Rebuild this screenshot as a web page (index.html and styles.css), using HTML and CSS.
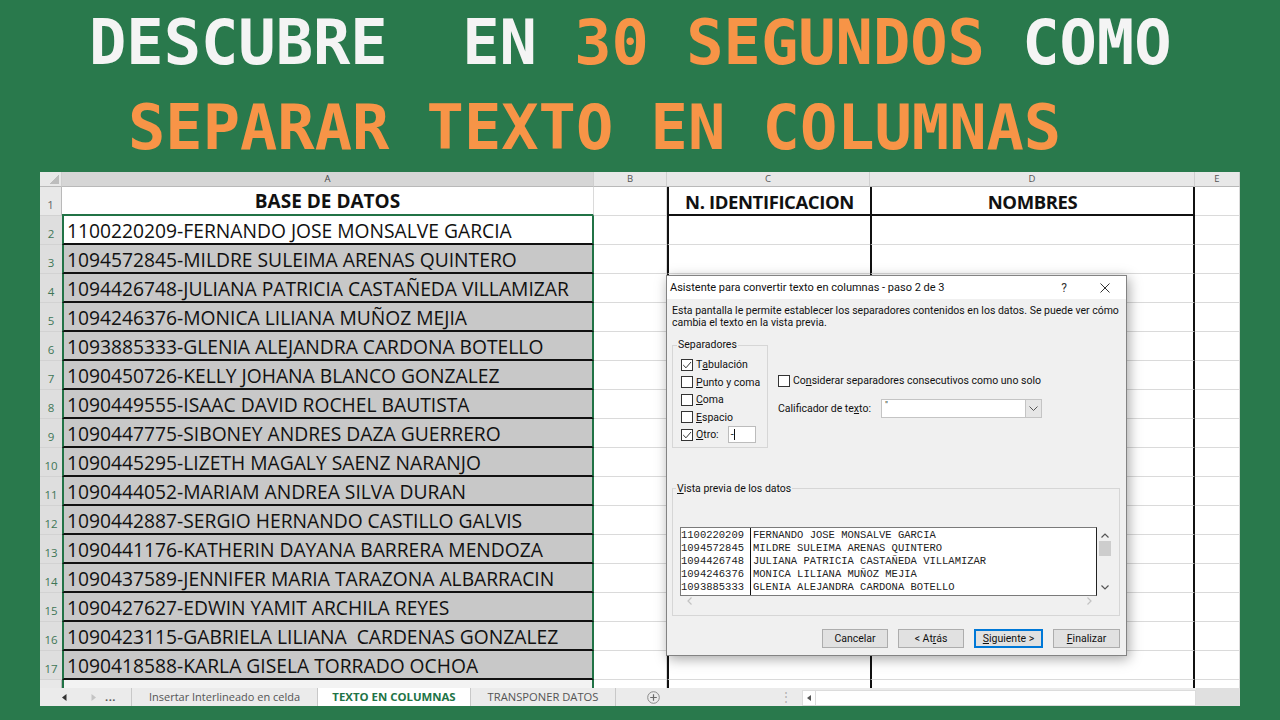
FILE: index.html
```html
<!DOCTYPE html>
<html lang="es">
<head>
<meta charset="utf-8">
<title>Separar texto en columnas</title>
<link rel="stylesheet" href="styles.css">
</head>
<body>
<div class="title">
  <div class="t1"><span class="w">DESCUBRE  EN</span> <span class="o">30 SEGUNDOS</span> <span class="w">COMO</span></div>
  <div class="t2"><span class="o">SEPARAR TEXTO EN COLUMNAS</span></div>
</div>

<div class="sheet">
  <div class="hd cn"></div><div class="hd sel">A</div><div class="hd">B</div><div class="hd">C</div><div class="hd">D</div><div class="hd">E</div>

  <div class="rh">1</div><div class="a1">BASE DE DATOS</div><div class="b"></div><div class="c h1">N. IDENTIFICACION</div><div class="d h1">NOMBRES</div><div class="e"></div>

  <div class="rh s">2</div><div class="a act">1100220209-FERNANDO JOSE MONSALVE GARCIA</div><div class="b"></div><div class="c"></div><div class="d"></div><div class="e"></div>
  <div class="rh s">3</div><div class="a">1094572845-MILDRE SULEIMA ARENAS QUINTERO</div><div class="b"></div><div class="c"></div><div class="d"></div><div class="e"></div>
  <div class="rh s">4</div><div class="a">1094426748-JULIANA PATRICIA CASTAÑEDA VILLAMIZAR</div><div class="b"></div><div class="c"></div><div class="d"></div><div class="e"></div>
  <div class="rh s">5</div><div class="a">1094246376-MONICA LILIANA MUÑOZ MEJIA</div><div class="b"></div><div class="c"></div><div class="d"></div><div class="e"></div>
  <div class="rh s">6</div><div class="a">1093885333-GLENIA ALEJANDRA CARDONA BOTELLO</div><div class="b"></div><div class="c"></div><div class="d"></div><div class="e"></div>
  <div class="rh s">7</div><div class="a">1090450726-KELLY JOHANA BLANCO GONZALEZ</div><div class="b"></div><div class="c"></div><div class="d"></div><div class="e"></div>
  <div class="rh s">8</div><div class="a">1090449555-ISAAC DAVID ROCHEL BAUTISTA</div><div class="b"></div><div class="c"></div><div class="d"></div><div class="e"></div>
  <div class="rh s">9</div><div class="a">1090447775-SIBONEY ANDRES DAZA GUERRERO</div><div class="b"></div><div class="c"></div><div class="d"></div><div class="e"></div>
  <div class="rh s">10</div><div class="a">1090445295-LIZETH MAGALY SAENZ NARANJO</div><div class="b"></div><div class="c"></div><div class="d"></div><div class="e"></div>
  <div class="rh s">11</div><div class="a">1090444052-MARIAM ANDREA SILVA DURAN</div><div class="b"></div><div class="c"></div><div class="d"></div><div class="e"></div>
  <div class="rh s">12</div><div class="a">1090442887-SERGIO HERNANDO CASTILLO GALVIS</div><div class="b"></div><div class="c"></div><div class="d"></div><div class="e"></div>
  <div class="rh s">13</div><div class="a">1090441176-KATHERIN DAYANA BARRERA MENDOZA</div><div class="b"></div><div class="c"></div><div class="d"></div><div class="e"></div>
  <div class="rh s">14</div><div class="a">1090437589-JENNIFER MARIA TARAZONA ALBARRACIN</div><div class="b"></div><div class="c"></div><div class="d"></div><div class="e"></div>
  <div class="rh s">15</div><div class="a">1090427627-EDWIN YAMIT ARCHILA REYES</div><div class="b"></div><div class="c"></div><div class="d"></div><div class="e"></div>
  <div class="rh s">16</div><div class="a">1090423115-GABRIELA LILIANA  CARDENAS GONZALEZ</div><div class="b"></div><div class="c"></div><div class="d"></div><div class="e"></div>
  <div class="rh s">17</div><div class="a">1090418588-KARLA GISELA TORRADO OCHOA</div><div class="b"></div><div class="c"></div><div class="d"></div><div class="e"></div>

  <div class="rh p"></div><div class="a p"></div><div class="b p"></div><div class="c p"></div><div class="d p"></div><div class="e p"></div>
</div>

<div class="tabs">
  <div class="nav">
    <svg class="tri" width="5" height="7" viewBox="0 0 5 7"><path d="M4.5 0 L0 3.5 L4.5 7 Z" fill="#333"/></svg>
    <svg class="tri tri-r" width="5" height="7" viewBox="0 0 5 7"><path d="M0.5 0 L5 3.5 L0.5 7 Z" fill="#c4c4c4"/></svg>
    <span class="dots">...</span>
  </div>
  <div class="tab t-ins">Insertar Interlineado en celda</div>
  <div class="tab t-act">TEXTO EN COLUMNAS</div>
  <div class="tab t-tr">TRANSPONER DATOS</div>
  <div class="plus-area">
    <svg class="plus" width="13" height="13" viewBox="0 0 13 13"><circle cx="6.5" cy="6.5" r="5.8" fill="none" stroke="#8a8a8a" stroke-width="1"/><path d="M6.5 3.2 V9.8 M3.2 6.5 H9.8" stroke="#6a6a6a" stroke-width="1.2"/></svg>
    <span class="vdots">⋮</span>
  </div>
  <div class="hbar">
    <div class="harrow"><svg width="4" height="6" viewBox="0 0 4 6"><path d="M4 0 L0 3 L4 6 Z" fill="#555"/></svg></div>
    <div class="htrack"></div>
  </div>
  <div class="tab-rest"></div>
</div>

<div class="dlg">
  <div class="dlg-title">
    <span class="dt-text">Asistente para convertir texto en columnas - paso 2 de 3</span>
    <span class="dt-help">?</span>
    <svg class="dt-close" width="10" height="10" viewBox="0 0 10 10"><path d="M0.5 0.5 L9.5 9.5 M9.5 0.5 L0.5 9.5" stroke="#333" stroke-width="1"/></svg>
  </div>
  <div class="dlg-body">
    <p class="desc">Esta pantalla le permite establecer los separadores contenidos en los datos. Se puede ver cómo<br>cambia el texto en la vista previa.</p>
    <div class="opts">
      <fieldset class="seps">
        <legend>Separadores</legend>
        <div class="chk"><span class="box"><svg width="10" height="10" viewBox="0 0 10 10"><path d="M1.2 5 L4 7.8 L9 2" fill="none" stroke="#333" stroke-width="1"/></svg></span>T<u>a</u>bulación</div>
        <div class="chk"><span class="box"></span><u>P</u>unto y coma</div>
        <div class="chk"><span class="box"></span><u>C</u>oma</div>
        <div class="chk"><span class="box"></span><u>E</u>spacio</div>
        <div class="chk"><span class="box"><svg width="10" height="10" viewBox="0 0 10 10"><path d="M1.2 5 L4 7.8 L9 2" fill="none" stroke="#333" stroke-width="1"/></svg></span><u>O</u>tro:<span class="otro">-<i class="caret"></i></span></div>
      </fieldset>
      <div class="opts-right">
        <div class="chk consec"><span class="box"></span>Co<u>n</u>siderar separadores consecutivos como uno solo</div>
        <div class="calif">
          <span class="calif-lbl">Calificador de te<u>x</u>to:</span>
          <div class="combo">
            <span class="combo-val">"</span>
            <span class="combo-btn"><svg width="9" height="5" viewBox="0 0 9 5"><path d="M0.5 0.5 L4.5 4.5 L8.5 0.5" fill="none" stroke="#555" stroke-width="1"/></svg></span>
          </div>
        </div>
      </div>
    </div>
    <fieldset class="prev">
      <legend><u>V</u>ista previa de los datos</legend>
      <div class="prev-area">
        <div class="list">
          <div class="col1">1100220209<br>1094572845<br>1094426748<br>1094246376<br>1093885333</div>
          <div class="col2">FERNANDO JOSE MONSALVE GARCIA<br>MILDRE SULEIMA ARENAS QUINTERO<br>JULIANA PATRICIA CASTAÑEDA VILLAMIZAR<br>MONICA LILIANA MUÑOZ MEJIA<br>GLENIA ALEJANDRA CARDONA BOTELLO</div>
        </div>
        <div class="vscroll">
          <svg width="8" height="5" viewBox="0 0 8 5"><path d="M0.5 4.5 L4 1 L7.5 4.5" fill="none" stroke="#555" stroke-width="1.2"/></svg>
          <span class="thumb"></span>
          <span class="vspace"></span>
          <svg width="8" height="5" viewBox="0 0 8 5"><path d="M0.5 0.5 L4 4 L7.5 0.5" fill="none" stroke="#555" stroke-width="1.2"/></svg>
        </div>
      </div>
      <div class="hscroll">
        <svg width="5" height="8" viewBox="0 0 5 8"><path d="M4.5 0.5 L1 4 L4.5 7.5" fill="none" stroke="#c2c2c2" stroke-width="1.2"/></svg>
        <svg width="5" height="8" viewBox="0 0 5 8"><path d="M0.5 0.5 L4 4 L0.5 7.5" fill="none" stroke="#c2c2c2" stroke-width="1.2"/></svg>
      </div>
    </fieldset>
    <div class="btns">
      <span class="btn b-can">Cancelar</span>
      <span class="btn b-atr">&lt; At<u>r</u>ás</span>
      <span class="btn b-sig"><u>S</u>iguiente &gt;</span>
      <span class="btn b-fin"><u>F</u>inalizar</span>
    </div>
  </div>
</div>
</body>
</html>
```

FILE: styles.css
```css
html, body {
  margin: 0;
  padding: 0;
}
body {
  background: #29794c;
  width: 1280px;
  height: 720px;
  overflow: hidden;
  position: relative;
  font-family: "Open Sans", "Liberation Sans", sans-serif;
}

/* ---------- title ---------- */
.title {
  height: 172px;
  font-family: "DejaVu Sans Mono", "Liberation Mono", monospace;
  font-weight: bold;
  font-size: 62px;
  line-height: 85px;
}
.t1, .t2 { white-space: pre; height: 85px; }
.t1 { padding-left: 89px; }
.t2 { padding-left: 128px; }
.w { color: #f4f4f4; }
.o { color: #f79447; }

/* ---------- sheet ---------- */
.sheet {
  margin-left: 40px;
  width: 1200px;
  display: grid;
  grid-template-columns: 22px 532px 73px 203px 325px 45px;
  grid-template-rows: 15px repeat(17, 29px) 8px;
  background: #fff;
}
.sheet > div {
  box-sizing: border-box;
  border-right: 1px solid #dadada;
  border-bottom: 1px solid #dadada;
  overflow: hidden;
  white-space: pre;
}
.hd {
  background: #e8e8e8;
  border-right-color: #cfcfcf !important;
  border-bottom-color: #b9b9b9 !important;
  font-size: 9.5px;
  line-height: 14px;
  color: #555;
  text-align: center;
}
.hd.sel { background: #d6d6d6; color: #444; }
.cn { position: relative; }
.cn::after {
  content: "";
  position: absolute;
  right: 2px;
  bottom: 2px;
  width: 9px;
  height: 9px;
  background: linear-gradient(135deg, transparent 50%, #bdbdbd 50%);
}
.rh {
  background: #e8e8e8;
  border-right-color: #b9b9b9 !important;
  border-bottom-color: #d2d2d2 !important;
  font-size: 11.5px;
  color: #666;
  display: flex;
  justify-content: center;
  align-items: flex-end;
  line-height: 12px;
  padding-bottom: 4px;
}
.rh.s {
  background: #dedede;
  color: #3e7656;
  border-right: 0 !important;
}
.rh.p { border-bottom: 0 !important; padding: 0; }

.a1, .a, .h1 {
  font-size: 19.25px;
  line-height: 25px;
  padding-top: 2px;
  color: #111;
}
.a1 {
  font-weight: bold;
  text-align: center;
  border-bottom: 2px solid #217346 !important;
  font-size: 19px;
}
.a {
  background: #c8c8c8;
  border-left: 2px solid #217346;
  border-right: 2px solid #217346 !important;
  border-bottom: 2px solid #111 !important;
  padding-left: 3px;
}
.a.act { background: #fff; }
.a.p {
  background: #f3f3f3;
  border-bottom: 0 !important;
  border-right-color: #217346 !important;
}
.c {
  border-left: 2px solid #111;
  border-right: 0 !important;
}
.d {
  border-left: 2px solid #111;
  border-right: 2px solid #111 !important;
}
.h1 {
  font-weight: bold;
  text-align: center;
  font-size: 18.5px;
  letter-spacing: -0.4px;
  border-bottom: 2px solid #111 !important;
}
.p { border-bottom: 0 !important; }

/* ---------- sheet tabs ---------- */
.tabs {
  margin-left: 40px;
  width: 1200px;
  height: 18px;
  display: flex;
  background: #ebebeb;
  font-size: 11px;
  color: #555;
  line-height: 18px;
}
.nav {
  width: 91px;
  display: flex;
  align-items: center;
  box-sizing: border-box;
  padding-left: 22px;
}
.tri-r { margin-left: 24px; }
.dots { margin-left: 9px; font-weight: bold; color: #555; letter-spacing: 0.5px; }
.tab {
  box-sizing: border-box;
  border-left: 1px solid #c8c8c8;
  text-align: center;
  white-space: nowrap;
}
.t-ins { width: 186px; }
.t-act {
  width: 153px;
  background: #fff;
  color: #217346;
  font-weight: bold;
  font-size: 11.4px;
}
.t-tr { width: 146px; border-right: 1px solid #c8c8c8; font-size: 11.2px; }
.plus-area {
  width: 186px;
  display: flex;
  align-items: center;
  box-sizing: border-box;
  padding-left: 31px;
}
.vdots { margin-left: 120px; color: #b0b0b0; font-size: 12px; }
.hbar {
  width: 394px;
  display: flex;
  align-items: center;
  padding-top: 2px;
  box-sizing: border-box;
  height: 18px;
}
.harrow {
  width: 14px;
  height: 16px;
  display: flex;
  align-items: center;
  justify-content: center;
  background: #fff;
  border: 1px solid #dcdcdc;
  box-sizing: border-box;
}
.htrack {
  flex: 1;
  height: 16px;
  background: #fff;
  border: 1px solid #dcdcdc;
  border-left: 0;
  box-sizing: border-box;
}
.tab-rest { flex: 1; background: #e0e0e0; }

/* ---------- dialog ---------- */
.dlg {
  position: absolute;
  left: 666px;
  top: 275px;
  width: 461px;
  height: 381px;
  box-sizing: border-box;
  background: #f0f0f0;
  border: 1px solid #838383;
  box-shadow: 2px 3px 12px rgba(0, 0, 0, 0.35);
  font-family: Roboto, "Liberation Sans", sans-serif;
  font-size: 10.5px;
  color: #111;
}
.dlg-title {
  height: 23px;
  background: #fff;
  display: flex;
  align-items: center;
  padding: 0 16px 0 3px;
  font-size: 11px;
}
.dt-text { flex: 1; }
.dt-help { font-size: 12px; color: #333; margin-right: 33px; }
.dlg-body { padding: 6px 6px 0 5px; }
.desc {
  margin: 0;
  line-height: 12px;
}
.opts { display: flex; margin-top: 10px; }
fieldset {
  margin: 0;
  padding: 0;
  border: 1px solid #d6d6d6;
  min-inline-size: 0;
}
legend {
  padding: 0 1px;
  line-height: 12px;
}
.seps {
  width: 96px;
  box-sizing: border-box;
  padding: 5px 0 3px 8px;
}
.seps legend { margin-left: -4px; }
.chk {
  display: flex;
  align-items: center;
  height: 17.5px;
  white-space: nowrap;
}
.box {
  width: 12px;
  height: 12px;
  box-sizing: border-box;
  border: 1px solid #333;
  background: #fff;
  margin-right: 3px;
  display: flex;
  align-items: center;
  justify-content: center;
}
.otro {
  margin-left: 9px;
  width: 28px;
  height: 17px;
  box-sizing: border-box;
  background: #fff;
  border: 1px solid #bcbcbc;
  display: flex;
  align-items: center;
  padding-left: 2px;
}
.caret {
  width: 1px;
  height: 11px;
  background: #111;
}
.opts-right { margin-left: 10px; }
.consec { margin-top: 33px; }
.calif {
  display: flex;
  align-items: center;
  margin-top: 9px;
}
.calif-lbl { width: 103px; }
.combo {
  width: 161px;
  height: 19px;
  box-sizing: border-box;
  background: #fff;
  border: 1px solid #c4c4c4;
  display: flex;
}
.combo-val { flex: 1; padding-left: 3px; line-height: 11px; font-size: 9px; color: #333; }
.combo-btn {
  width: 15px;
  background: #e6e6e6;
  border-left: 1px solid #c4c4c4;
  display: flex;
  align-items: center;
  justify-content: center;
}
.prev {
  margin-top: 35px;
  width: 448px;
  box-sizing: border-box;
  padding: 32px 7px 8px 7px;
}
.prev legend { margin-left: -4px; }
.prev-area { display: flex; }
.list {
  width: 418px;
  height: 69px;
  box-sizing: border-box;
  background: #fff;
  border: 1px solid #7a7a7a;
  border-right: 1px solid #222;
  display: flex;
  font-family: "Liberation Mono", "DejaVu Sans Mono", monospace;
  font-size: 10.5px;
  line-height: 13px;
  color: #222;
  overflow: hidden;
}
.col1 {
  width: 70px;
  box-sizing: border-box;
  border-right: 1px solid #111;
  padding-top: 1px;
  white-space: nowrap;
  overflow: hidden;
}
.col2 { padding-left: 2px; padding-top: 1px; white-space: nowrap; }
.vscroll {
  width: 15px;
  height: 69px;
  display: flex;
  flex-direction: column;
  align-items: center;
  padding-top: 6px;
  box-sizing: border-box;
}
.thumb {
  width: 12px;
  height: 15px;
  background: #cdcdcd;
  margin-top: 3px;
}
.vspace { flex: 1; }
.vscroll svg:last-child { margin-bottom: 6px; }
.hscroll {
  height: 11px;
  display: flex;
  align-items: center;
  justify-content: space-between;
  padding: 0 20px 0 7px;
}
.btns {
  display: flex;
  justify-content: flex-end;
  gap: 10px;
  margin-top: 13px;
}
.btn {
  height: 19px;
  box-sizing: border-box;
  background: #e1e1e1;
  border: 1px solid #adadad;
  text-align: center;
  line-height: 17px;
  width: 66px;
}
.b-sig { width: 69px; border-color: #0078d7; box-shadow: inset 0 0 0 1px #0078d7; }
.b-fin { width: 67px; }
```
